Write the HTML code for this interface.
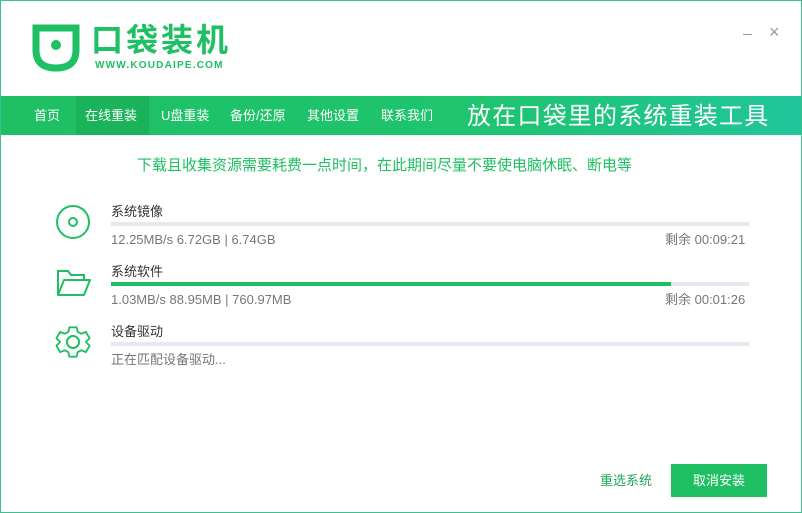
<!DOCTYPE html>
<html><head><meta charset="utf-8"><style>
*{margin:0;padding:0;box-sizing:border-box}
body{width:802px;height:513px;overflow:hidden;background:#fff;font-family:"Liberation Sans","Noto Sans CJK SC",sans-serif;position:relative}
.frame{position:absolute;left:0;top:0;width:802px;height:513px;border:1px solid #3cc090;}
.abs{position:absolute;line-height:16px}
.nav{left:1px;top:96px;width:800px;height:39px;background:linear-gradient(90deg,#1fc063 0%,#1ec46f 60%,#22c59b 100%)}
.nav span{position:absolute;top:12px;color:#fff;font-size:13px;line-height:16px}
.t{font-size:13px;color:#333}
.s{font-size:13px;color:#777}
.bar{height:4px;background:#e6e9ef;left:111px;width:638px}
</style></head><body>
<div class="frame"></div>
<svg class="abs" style="left:32px;top:24px" width="48" height="48" viewBox="0 0 48 48"><path d="M4 4H44V26Q44 44 24 44Q4 44 4 26Z" fill="none" stroke="#1ec063" stroke-width="7"/><circle cx="24" cy="21" r="5" fill="#1ec063"/></svg>
<div class="abs" style="left:91px;top:23px;font-size:32px;line-height:34px;font-weight:bold;color:#1ec063;letter-spacing:3px">口袋装机</div>
<div class="abs" style="left:95px;top:61px;font-size:10px;line-height:10px;font-weight:bold;color:#1ec063;letter-spacing:1.2px;font-family:'Liberation Sans',sans-serif">WWW.KOUDAIPE.COM</div>
<div class="abs" style="left:743px;top:34px;width:9px;height:1px;background:#999"></div>
<div class="abs" style="left:769px;top:24px;font-size:18px;color:#999">×</div>
<div class="abs nav">
<div class="abs" style="left:75px;top:0;width:73px;height:39px;background:#1bb35a"></div>
<span style="left:33px">首页</span><span style="left:84px">在线重装</span><span style="left:160px">U盘重装</span><span style="left:229px">备份/还原</span><span style="left:306px">其他设置</span><span style="left:380px">联系我们</span>
<span style="left:466px;top:8px;font-size:24px;line-height:26px;letter-spacing:1.2px">放在口袋里的系统重装工具</span>
</div>
<div class="abs" style="left:137px;top:157px;font-size:15px;line-height:18px;color:#1ec063">下载且收集资源需要耗费一点时间，在此期间尽量不要使电脑休眠、断电等</div>
<svg class="abs" style="left:55px;top:204px" width="36" height="36"><circle cx="18" cy="18" r="16" fill="none" stroke="#1ec063" stroke-width="2"/><circle cx="18" cy="18" r="4" fill="none" stroke="#1ec063" stroke-width="2"/></svg>
<svg class="abs" style="left:56px;top:268px" width="36" height="30"><path d="M2 27V3H12L15 7H28V12" fill="none" stroke="#1ec063" stroke-width="2"/><path d="M2 27L8 12H34L28 27Z" fill="none" stroke="#1ec063" stroke-width="2" stroke-linejoin="round"/></svg>
<svg class="abs" style="left:54px;top:323px" width="38" height="38" viewBox="0 0 38 38"><path d="M15 3H23L24 8L28 10L33 8L37 15L33 19L33 19L37 23L33 30L28 28L24 30L23 35H15L14 30L10 28L5 30L1 23L5 19L1 15L5 8L10 10L14 8Z" fill="none" stroke="#1ec063" stroke-width="2" stroke-linejoin="round" transform="translate(19 19) scale(.92) translate(-19 -19)"/><circle cx="19" cy="19" r="6" fill="none" stroke="#1ec063" stroke-width="2"/></svg>
<div class="abs t" style="left:111px;top:204px">系统镜像</div>
<div class="abs bar" style="top:222px"></div>
<div class="abs s" style="left:111px;top:232px">12.25MB/s 6.72GB | 6.74GB</div>
<div class="abs s" style="left:665px;top:232px">剩余 00:09:21</div>
<div class="abs t" style="left:111px;top:264px">系统软件</div>
<div class="abs bar" style="top:282px"></div>
<div class="abs" style="left:111px;top:282px;width:560px;height:4px;background:#1ec063"></div>
<div class="abs s" style="left:111px;top:292px">1.03MB/s 88.95MB | 760.97MB</div>
<div class="abs s" style="left:665px;top:292px">剩余 00:01:26</div>
<div class="abs t" style="left:111px;top:324px">设备驱动</div>
<div class="abs bar" style="top:342px"></div>
<div class="abs s" style="left:111px;top:352px">正在匹配设备驱动...</div>
<div class="abs" style="left:600px;top:473px;font-size:13px;color:#1fa85a">重选系统</div>
<div class="abs" style="left:671px;top:464px;width:96px;height:33px;background:#1ec063;color:#fff;font-size:13px;text-align:center;line-height:33px">取消安装</div>
</body></html>
